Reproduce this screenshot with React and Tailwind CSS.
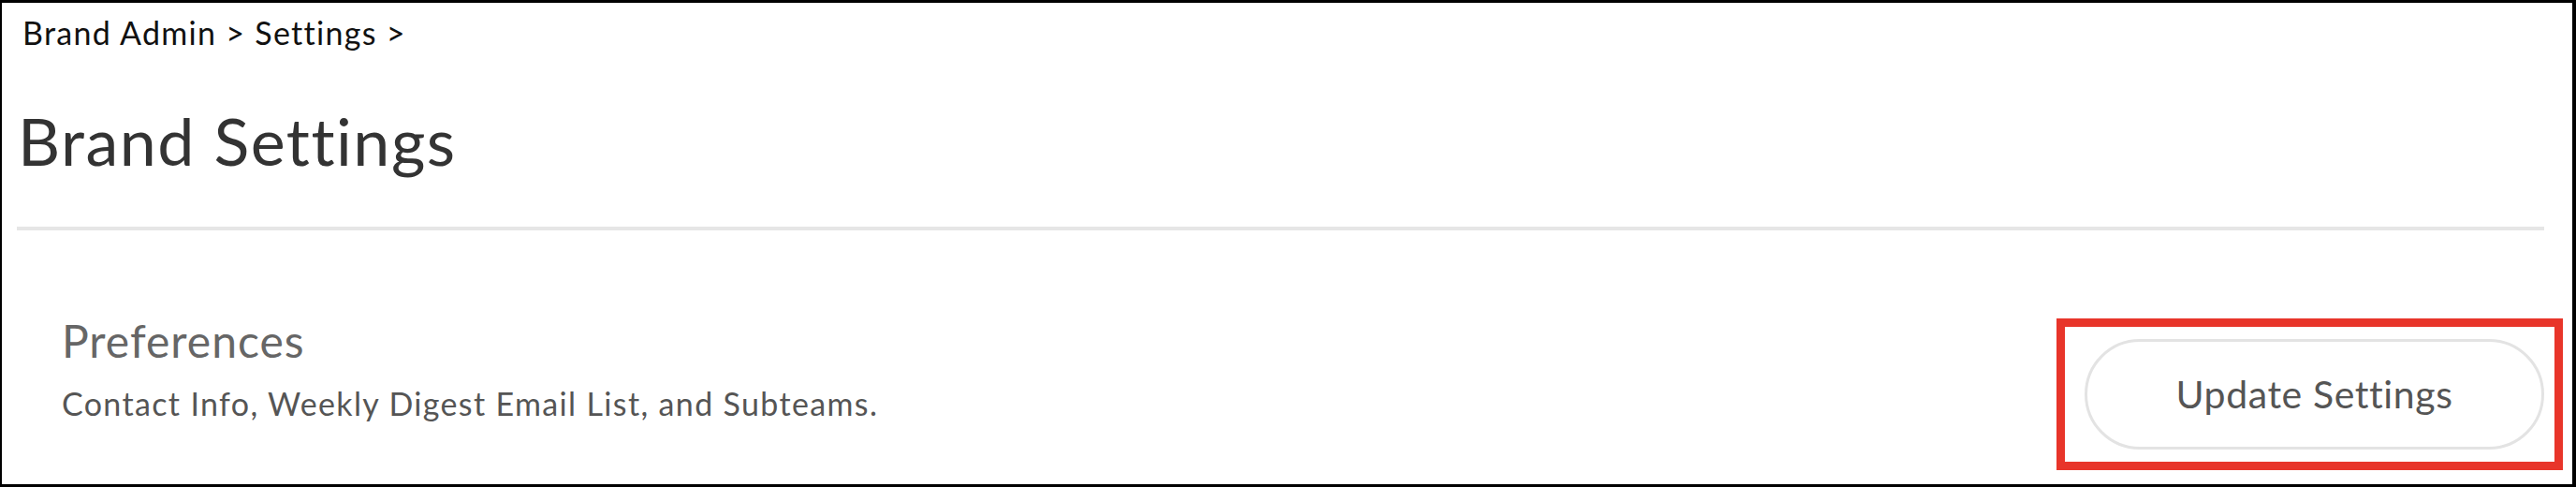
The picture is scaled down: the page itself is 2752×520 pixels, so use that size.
export default function App() {
  return (
    <div
      className="relative w-[2752px] h-[520px] bg-white border-black border-t-[3px] border-l-[2px] border-r-[4px] border-b-[3px] overflow-hidden"
      style={{ fontFamily: "Lato, 'Open Sans', sans-serif" }}
    >
      <div className="pl-[16px] pr-[30px]">
        <div className="pt-[14px] pl-[6px] text-[34px] leading-[36px] tracking-[1.3px] text-[#111111]">
          Brand Admin &gt; Settings &gt;
        </div>
        <h1 className="mt-[57px] pl-[1px] text-[70px] leading-[80px] tracking-[1.5px] text-[#333333] font-normal">
          Brand Settings
        </h1>
        <div className="mt-[52px] h-[4px] bg-[#e6e6e6]" />
        <div className="flex items-start justify-between pl-[48px] mt-[90px]">
          <div>
            <div className="text-[48px] leading-[56px] tracking-[1px] text-[#666666]">Preferences</div>
            <div className="mt-[19px] text-[34px] leading-[40px] tracking-[1.35px] text-[#555555]">
              Contact Info, Weekly Digest Email List, and Subteams.
            </div>
          </div>
          <button className="mt-[26px] w-[491px] h-[118px] rounded-full border-[3px] border-[#e3e3e3] bg-white text-[41px] tracking-[0.6px] text-[#555555]">
            Update Settings
          </button>
        </div>
      </div>
      <div className="absolute left-[2195px] top-[337px] w-[541px] h-[162px] border-[9px] border-[#e8352a]" />
    </div>
  );
}
